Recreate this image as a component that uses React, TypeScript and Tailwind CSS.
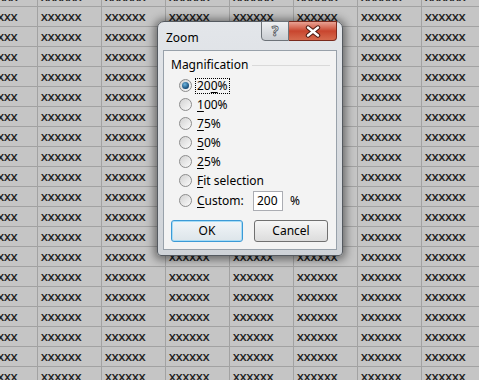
import React from 'react';

const COLS = 8;
const ROWS = 20;

// spreadsheet cells behind the dialog
function Sheet() {
    return (
        <div className="-ml-[26px] -mt-[13px] grid w-max grid-cols-[repeat(8,64px)] auto-rows-[20px]">
            {Array.from({ length: ROWS * COLS }).map((_, i) => (
                <div
                    key={i}
                    className="border-b border-r border-[#a2a2a2] pl-[3px] text-[13.5px] leading-[20px] text-[#111111] [font-family:'Liberation_Sans',Arial,sans-serif] [-webkit-text-stroke:0.2px_#111111]"
                >
                    xxxxxx
                </div>
            ))}
        </div>
    );
}

function Radio({ checked }: { checked?: boolean }) {
    return (
        <span className="flex h-[13px] w-[13px] shrink-0 items-center justify-center rounded-full border border-[#8c8c8c] bg-gradient-to-br from-[#d2d2d2] to-[#fbfbfb]">
            {checked && (
                <span className="h-[7px] w-[7px] rounded-full bg-[radial-gradient(circle_at_40%_35%,#6fb6e0,#0f4470_75%)]" />
            )}
        </span>
    );
}

type Option = { pre: string; key: string; post: string; checked?: boolean };

const options: Option[] = [
    { pre: '20', key: '0', post: '%', checked: true },
    { pre: '', key: '1', post: '00%' },
    { pre: '', key: '7', post: '5%' },
    { pre: '', key: '5', post: '0%' },
    { pre: '', key: '2', post: '5%' },
    { pre: '', key: 'F', post: 'it selection' },
];

function Label({ o, focused }: { o: Option; focused?: boolean }) {
    return (
        <span
            className={`border px-[1px] leading-[14px] ${focused ? 'border-dotted border-black' : 'border-transparent'}`}
        >
            {o.pre}
            <span className="underline underline-offset-[2px]">{o.key}</span>
            {o.post}
        </span>
    );
}

function ZoomDialog() {
    return (
        <div className="absolute left-[157px] top-[21px] flex h-[235px] w-[186px] flex-col rounded-b-[4px] rounded-t-[7px] border border-[#555a60] bg-gradient-to-b from-[#e3e6ea] to-[#cfd3d8] px-[5px] pb-[5px] text-[12px] text-black shadow-[0_1px_9px_3px_rgba(0,0,0,0.45)] [font-family:'Noto_Sans','Open_Sans',sans-serif]">
            {/* Title bar */}
            <div className="flex h-[28px] items-start">
                <span className="pl-[3px] pt-[8px] leading-[16px]">Zoom</span>
                <div className="ml-auto -mt-px flex">
                    <div className="flex h-[20px] w-[28px] items-center justify-center rounded-bl-[4px] border border-[#6d7379] bg-gradient-to-b from-[#eef0f2] to-[#c8ccd1] text-[14px] font-bold leading-none text-[#ececec] [-webkit-text-stroke:0.8px_#545a61]">
                        ?
                    </div>
                    <div className="flex h-[20px] w-[48px] items-center justify-center rounded-br-[4px] border border-l-0 border-[#7a2a1e] bg-gradient-to-b from-[#e8a193] via-[#c8452e] to-[#d66a4e]">
                        <svg width="16" height="13" viewBox="0 0 16 13">
                            <path d="M3 2.5 L13 10.5 M13 2.5 L3 10.5" stroke="#4a1a12" strokeWidth="4.4" strokeLinecap="round" />
                            <path d="M3 2.5 L13 10.5 M13 2.5 L3 10.5" stroke="#ffffff" strokeWidth="2.4" strokeLinecap="round" />
                        </svg>
                    </div>
                </div>
            </div>

            {/* Client area */}
            <div className="flex flex-1 flex-col border border-[#98a1aa] bg-[#f3f3f3] pt-[6px]">
                <div className="flex h-[16px] items-center gap-[4px] pl-[7px] pr-[6px]">
                    <span className="leading-[16px]">Magnification</span>
                    <span className="h-px flex-1 bg-[#d9d9d9]" />
                </div>
                <div className="mt-[3px] flex flex-col pl-[15px]">
                    {options.map((o, i) => (
                        <div key={i} className="flex h-[19px] items-center gap-[3px]">
                            <Radio checked={o.checked} />
                            <Label o={o} focused={i === 0} />
                        </div>
                    ))}
                    <div className="flex h-[21px] items-center gap-[3px]">
                        <Radio />
                        <span className="w-[55px] border border-transparent px-[1px] leading-[14px]">
                            <span className="underline underline-offset-[2px]">C</span>ustom:
                        </span>
                        <span className="flex h-[20px] w-[30px] items-center border border-[#abadb3] bg-white pl-[3px]">200</span>
                        <span className="ml-[4px]">%</span>
                    </div>
                </div>
                <div className="mt-[9px] flex gap-[11px] pl-[7px]">
                    <div className="flex h-[22px] w-[72px] items-center justify-center rounded-[3px] border border-[#3c9ad6] bg-gradient-to-b from-[#f1f5f8] to-[#dde5ea] shadow-[inset_0_0_0_1px_#a6dcf6]">
                        OK
                    </div>
                    <div className="flex h-[22px] w-[74px] items-center justify-center rounded-[3px] border border-[#707070] bg-gradient-to-b from-[#f6f6f6] to-[#dcdcdc]">
                        Cancel
                    </div>
                </div>
            </div>
        </div>
    );
}

export default function App() {
    return (
        <div className="relative h-[380px] w-[479px] overflow-hidden bg-[#c5c5c5]">
            <Sheet />
            <ZoomDialog />
        </div>
    );
}
